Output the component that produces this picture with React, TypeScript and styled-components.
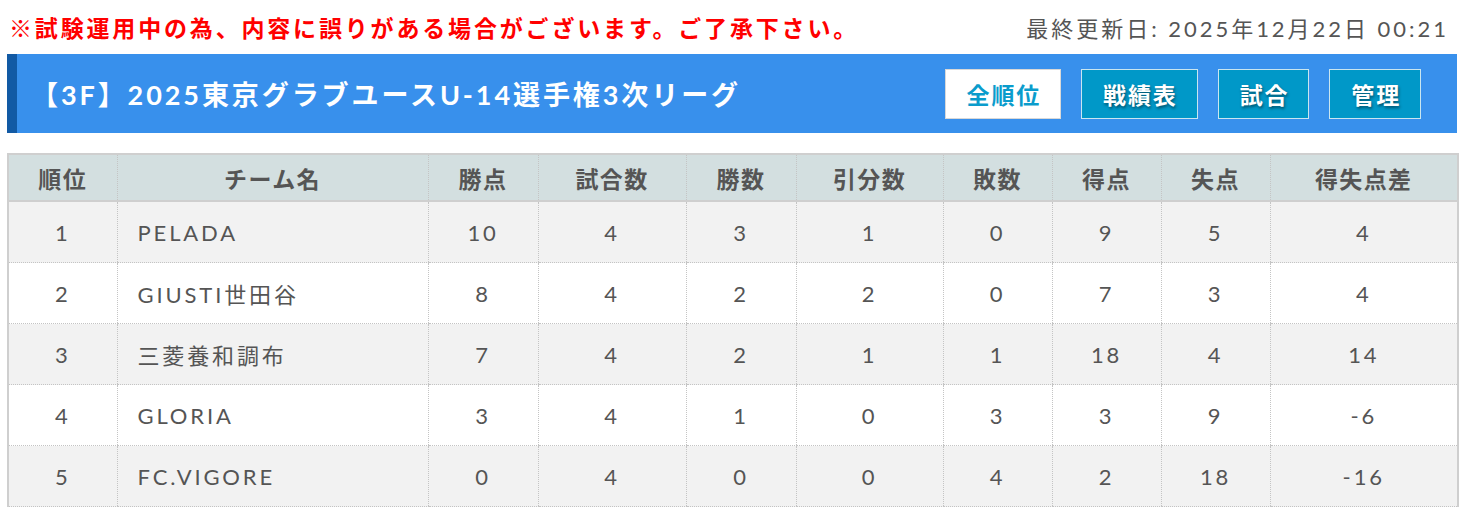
import React from "react";
import styled, { createGlobalStyle } from "styled-components";

const GlobalStyle = createGlobalStyle`
  body {
    margin: 0;
    background: #fff;
    font-family: Lato, "Noto Sans CJK JP", sans-serif;
    color: #555;
  }
`;

const Page = styled.div`
  width: 1450px;
  padding: 0 20px 0 7px;
`;

const TopRow = styled.div`
  height: 54px;
  display: flex;
  align-items: center;
  justify-content: space-between;
  padding: 0 8px 0 2px;
`;

const Notice = styled.p`
  margin: 0;
  color: #ff0000;
  font-size: 23px;
  font-weight: 700;
  letter-spacing: 0.123em;
`;

const Updated = styled.p`
  margin: 0;
  color: #555;
  font-size: 22px;
  letter-spacing: 0.135em;
`;

const Bar = styled.div`
  height: 79px;
  box-sizing: border-box;
  display: flex;
  align-items: center;
  justify-content: space-between;
  background: #3890ec;
  border-left: 10px solid #125aa4;
  padding: 0 36px 0 14px;
  margin-bottom: 20px;
`;

const Title = styled.h1`
  margin: 0;
  color: #fff;
  font-size: 27px;
  font-weight: 700;
  letter-spacing: 0.108em;
`;

const Nav = styled.div`
  display: flex;
  gap: 20px;
`;

const NavButton = styled.a<{ $active?: boolean }>`
  height: 50px;
  box-sizing: border-box;
  display: flex;
  align-items: center;
  padding: 0 19px 0 21px;
  font-size: 23px;
  font-weight: 700;
  letter-spacing: 0.08em;
  border: 1px solid ${(p) => (p.$active ? "#d8d8d8" : "#c9e6f0")};
  background: ${(p) => (p.$active ? "#fff" : "#0098c8")};
  color: ${(p) => (p.$active ? "#0a9ccc" : "#fff")};
  text-shadow: ${(p) => (p.$active ? "none" : "1px 2px 3px rgba(0,0,0,0.45)")};
`;

const Table = styled.table`
  width: 1450px;
  border-collapse: collapse;
  table-layout: fixed;
  border-left: 2px solid #cfcfcf;
  border-right: 2px solid #cfcfcf;
`;

const Th = styled.th`
  height: 45px;
  background: #d3dfe0;
  color: #555;
  font-size: 23px;
  font-weight: 700;
  letter-spacing: 0.06em;
  border-top: 2px solid #cfcfcf;
  border-bottom: 2px solid #cfcfcf;
  border-left: 1px dotted #c4c4c4;
  padding: 0;
`;

const Row = styled.tr<{ $odd: boolean }>`
  background: ${(p) => (p.$odd ? "#f2f2f2" : "#fff")};
`;

const Td = styled.td<{ $left?: boolean }>`
  height: 60px;
  padding: 0 0 0 ${(p) => (p.$left ? "20px" : "0")};
  text-align: ${(p) => (p.$left ? "left" : "center")};
  font-size: 22px;
  letter-spacing: 0.13em;
  color: #555;
  border-left: 1px dotted #c4c4c4;
  border-bottom: 1px dotted #c4c4c4;
`;

const columns = [
  { label: "順位", width: 109 },
  { label: "チーム名", width: 311 },
  { label: "勝点", width: 110 },
  { label: "試合数", width: 148 },
  { label: "勝数", width: 110 },
  { label: "引分数", width: 147 },
  { label: "敗数", width: 109 },
  { label: "得点", width: 109 },
  { label: "失点", width: 109 },
  { label: "得失点差", width: 188 },
];

const teams: (string | number)[][] = [
  [1, "PELADA", 10, 4, 3, 1, 0, 9, 5, 4],
  [2, "GIUSTI世田谷", 8, 4, 2, 2, 0, 7, 3, 4],
  [3, "三菱養和調布", 7, 4, 2, 1, 1, 18, 4, 14],
  [4, "GLORIA", 3, 4, 1, 0, 3, 3, 9, -6],
  [5, "FC.VIGORE", 0, 4, 0, 0, 4, 2, 18, -16],
];

export default function App() {
  return (
    <Page>
      <GlobalStyle />
      <TopRow>
        <Notice>※試験運用中の為、内容に誤りがある場合がございます。ご了承下さい。</Notice>
        <Updated>最終更新日: 2025年12月22日 00:21</Updated>
      </TopRow>
      <Bar>
        <Title>【3F】2025東京グラブユースU-14選手権3次リーグ</Title>
        <Nav>
          <NavButton $active>全順位</NavButton>
          <NavButton>戦績表</NavButton>
          <NavButton>試合</NavButton>
          <NavButton>管理</NavButton>
        </Nav>
      </Bar>
      <Table>
        <colgroup>
          {columns.map((c) => (
            <col key={c.label} style={{ width: c.width }} />
          ))}
        </colgroup>
        <thead>
          <tr>
            {columns.map((c) => (
              <Th key={c.label}>{c.label}</Th>
            ))}
          </tr>
        </thead>
        <tbody>
          {teams.map((t, i) => (
            <Row key={i} $odd={i % 2 === 0}>
              {t.map((v, j) => (
                <Td key={j} $left={j === 1}>
                  {v}
                </Td>
              ))}
            </Row>
          ))}
        </tbody>
      </Table>
    </Page>
  );
}
